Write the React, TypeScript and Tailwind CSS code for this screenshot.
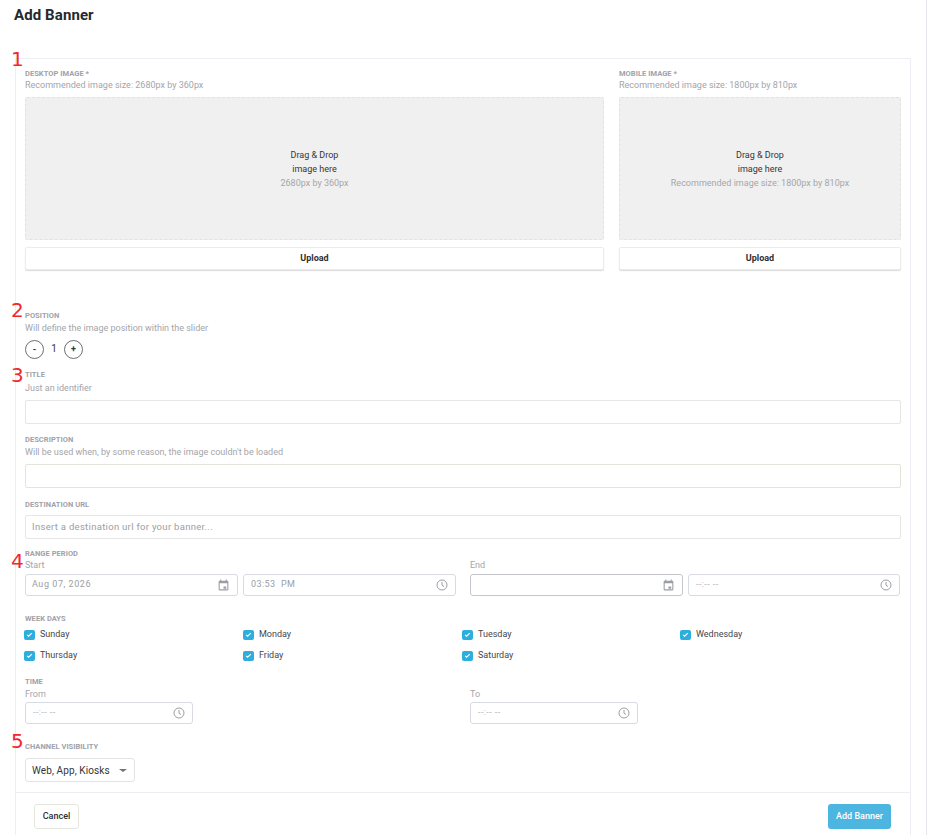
import React from 'react';

const FieldLabel = ({ children }: { children: React.ReactNode }) => (
  <div className="text-[7.5px] leading-[10px] font-bold uppercase tracking-[0.05px] text-[#a0a2a8]">{children}</div>
);

const Hint = ({ children }: { children: React.ReactNode }) => (
  <div className="text-[9px] leading-[12px] text-[#a3a5aa]">{children}</div>
);

const Note = ({ n, className }: { n: string; className: string }) => (
  <span className={`absolute left-[11px] font-['DejaVu_Sans',sans-serif] text-[20px] leading-[20px] text-[#f0282d] ${className}`}>{n}</span>
);

const CalendarIcon = () => (
  <svg width="13" height="13" viewBox="0 0 24 24" fill="#9b9ea3">
    <path d="M19 3h-1V1h-2v2H8V1H6v2H5c-1.1 0-2 .9-2 2v14c0 1.1.9 2 2 2h14c1.1 0 2-.9 2-2V5c0-1.1-.9-2-2-2zm0 16H5V8h14v11zm-7-5h5v4h-5z" />
  </svg>
);

const ClockIcon = () => (
  <svg width="12" height="12" viewBox="0 0 24 24" fill="none" stroke="#9b9ea3" strokeWidth="2">
    <circle cx="12" cy="12" r="10" />
    <path d="M12 6v6.5l4 2.5" />
  </svg>
);

const TimeInput = ({ width, value }: { width: string; value?: string }) => (
  <div className={`flex h-[22px] items-center justify-between rounded-[3px] border border-[#d8dbe2] bg-white pl-[7px] pr-[7px] text-[9px] text-[#9b9ea3] ${width}`}>
    {value ? (
      <span className="tracking-[0.4px] [word-spacing:3px]">{value}</span>
    ) : (
      <span className="tracking-[0.4px] text-[#b4b6bb]">--:-- --</span>
    )}
    <ClockIcon />
  </div>
);

const DateInput = ({ value = '', border }: { value?: string; border: string }) => (
  <div className={`flex h-[22px] w-[213px] items-center justify-between rounded-[3px] border bg-white pl-[6px] pr-[7px] text-[9px] text-[#9b9ea3] ${border}`}>
    <span className="tracking-[0.55px]">{value}</span>
    <CalendarIcon />
  </div>
);

const Day = ({ name }: { name: string }) => (
  <div className="flex h-[21px] items-center gap-[5px] text-[9px] text-[#43464d]">
    <span className="flex h-[10px] w-[11px] items-center justify-center rounded-[2px] bg-[#2eaedd]">
      <svg width="7" height="7" viewBox="0 0 24 24" fill="none" stroke="white" strokeWidth="4">
        <path d="M4 13l5 5L20 7" />
      </svg>
    </span>
    {name}
  </div>
);

const ImageDrop = ({ title, size, hint, width }: { title: string; size: string; hint: string; width: string }) => (
  <div className={width}>
    <FieldLabel>{title}</FieldLabel>
    <Hint>Recommended image size: {size}</Hint>
    <div className="mt-[6px] flex h-[143px] flex-col items-center justify-center rounded-[2px] border border-dashed border-[#e2e2e2] bg-[#f0f0f0] text-center text-[9px] leading-[14px] text-[#33363b]">
      <div>Drag &amp; Drop</div>
      <div>image here</div>
      <div className="text-[#a5a7ab]">{hint}</div>
    </div>
    <button className="mt-[7px] h-[23px] w-full rounded-[2px] border border-[#ececec] bg-white text-[9px] font-bold text-[#2c2f33] shadow-[0_1px_1px_rgba(0,0,0,0.15)]">
      Upload
    </button>
  </div>
);

const App = () => {
  const days = ['Sunday', 'Monday', 'Tuesday', 'Wednesday', 'Thursday', 'Friday', 'Saturday'];

  return (
    <div className="relative h-[835px] w-[929px] overflow-hidden bg-white font-['Roboto',sans-serif]">
      <div className="h-full w-[927px] border-r border-[#e6e6ec]">
        <h1 className="px-[14px] pt-[7px] text-[15px] leading-[17px] font-bold tracking-[0.1px] text-[#26282c]">Add Banner</h1>

        <div className="relative ml-[15px] mt-[34px] h-[800px] w-[896px] border border-[#edeef3] pl-[9px] pr-[9px] pt-[10px]">
          <div className="flex gap-[15px]">
            <ImageDrop title="Desktop Image *" size="2680px by 360px" hint="2680px by 360px" width="w-[579px]" />
            <ImageDrop title="Mobile Image *" size="1800px by 810px" hint="Recommended image size: 1800px by 810px" width="w-[282px]" />
          </div>

          <div className="mt-[41px]">
            <FieldLabel>Position</FieldLabel>
            <div className="mt-[1px]"><Hint>Will define the image position within the slider</Hint></div>
            <div className="mt-[6px] flex h-[19px] items-center">
              <span className="flex h-[19px] w-[19px] items-center justify-center rounded-full border border-[#6b6e72] text-[9px] font-bold text-[#33363b]">-</span>
              <span className="w-[20px] pb-[3px] text-center text-[10px] text-[#33363b]">1</span>
              <span className="flex h-[19px] w-[19px] items-center justify-center rounded-full border border-[#6b6e72] text-[9px] font-bold text-[#33363b]">+</span>
            </div>
          </div>

          <div className="mt-[11px]">
            <FieldLabel>Title</FieldLabel>
            <div className="mt-[2px]"><Hint>Just an identifier</Hint></div>
            <div className="mt-[6px] h-[24px] w-[876px] rounded-[2px] border border-[#e6e6e6] bg-white" />
          </div>

          <div className="mt-[11px]">
            <FieldLabel>Description</FieldLabel>
            <div className="mt-[1px]"><Hint>Will be used when, by some reason, the image couldn't be loaded</Hint></div>
            <div className="mt-[6px] h-[24px] w-[876px] rounded-[2px] border border-[#e3e5d8] bg-white" />
          </div>

          <div className="mt-[12px]">
            <FieldLabel>Destination URL</FieldLabel>
            <div className="mt-[5px] flex h-[24px] w-[876px] items-center rounded-[2px] border border-[#e6e6e6] bg-white pl-[6px] text-[9.5px] tracking-[0.3px] text-[#9b9ea3]">
              Insert a destination url for your banner...
            </div>
          </div>

          <div className="mt-[10px]">
            <FieldLabel>Range Period</FieldLabel>
            <div className="flex gap-[14px]">
              <div>
                <Hint>Start</Hint>
                <div className="mt-[3px] flex gap-[5px]">
                  <DateInput value="Aug 07, 2026" border="border-[#d8dbe2]" />
                  <TimeInput width="w-[213px]" value="03:53 PM" />
                </div>
              </div>
              <div>
                <Hint>End</Hint>
                <div className="mt-[3px] flex gap-[5px]">
                  <DateInput border="border-[#c4c6cc]" />
                  <TimeInput width="w-[212px]" />
                </div>
              </div>
            </div>
          </div>

          <div className="mt-[18px]">
            <FieldLabel>Week Days</FieldLabel>
            <div className="-ml-[1px] grid w-[876px] grid-cols-[219px_219px_218px_220px]">
              {days.map((d) => (
                <Day key={d} name={d} />
              ))}
            </div>
          </div>

          <div className="mt-[11px]">
            <FieldLabel>Time</FieldLabel>
            <div className="flex pt-[1px]">
              <div className="w-[445px]">
                <Hint>From</Hint>
                <div className="mt-[2px]"><TimeInput width="w-[168px]" /></div>
              </div>
              <div>
                <Hint>To</Hint>
                <div className="mt-[2px]"><TimeInput width="w-[168px]" /></div>
              </div>
            </div>
          </div>

          <div className="mt-[18px]">
            <FieldLabel>Channel Visibility</FieldLabel>
            <div className="mt-[6px] flex h-[24px] w-[110px] items-center justify-between rounded-[3px] border border-[#e3e3e3] bg-white pl-[6px] pr-[7px] text-[10px] tracking-[0.1px] text-[#33363b]">
              Web, App, Kiosks
              <span className="h-0 w-0 border-x-[4px] border-t-[3px] border-x-transparent border-t-[#6f7277]" />
            </div>
          </div>

          <div className="-mx-[9px] mt-[10px] flex items-start justify-between border-t border-[#edeef3] pl-[18px] pr-[19px] pt-[11px]">
            <button className="h-[25px] w-[45px] rounded-[3px] border border-[#e6e6e0] bg-white text-[9px] font-medium text-[#2c2f33]">
              Cancel
            </button>
            <button className="h-[25px] w-[63px] rounded-[3px] bg-[#4cb5e0] text-[9px] font-medium text-white">
              Add Banner
            </button>
          </div>
        </div>
      </div>

      <Note n="1" className="top-[49px]" />
      <Note n="2" className="top-[300px]" />
      <Note n="3" className="top-[365px]" />
      <Note n="4" className="top-[551px]" />
      <Note n="5" className="top-[731px]" />
    </div>
  );
};

export default App;
